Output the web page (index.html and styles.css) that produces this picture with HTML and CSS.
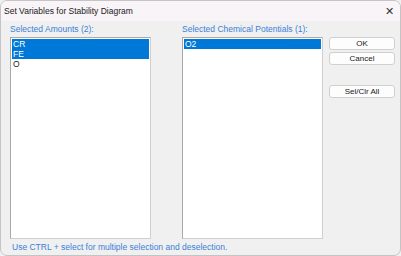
FILE: index.html
```html
<html>
<head>
<title>Set Variables for Stability Diagram</title>
<link rel="stylesheet" href="styles.css">
</head>
<body>
<div class="window">
  <div class="titlebar">
    <span class="title">Set Variables for Stability Diagram</span>
    <span class="close">&#x2715;</span>
  </div>
  <div class="content">
    <div class="col">
      <div class="caption">Selected Amounts (2):</div>
      <div class="listbox">
        <div class="item sel">CR</div>
        <div class="item sel">FE</div>
        <div class="item">O</div>
      </div>
    </div>
    <div class="col col2">
      <div class="caption">Selected Chemical Potentials (1):</div>
      <div class="listbox">
        <div class="item sel">O2</div>
      </div>
    </div>
    <div class="buttons">
      <button class="btn">OK</button>
      <button class="btn">Cancel</button>
      <button class="btn selall">Sel/Clr All</button>
    </div>
  </div>
  <div class="hint">Use CTRL + select for multiple selection and deselection.</div>
</div>
</body>
</html>
```

FILE: styles.css
```css
BODY {margin:0;font-family:"Liberation Sans",Arial,sans-serif;font-size:8.5px;background:#f0f0f0;}

.window {width:401px;height:256px;box-sizing:border-box;border:1px solid #c4c4c4;border-radius:7px;
  background:#f0f0f0;overflow:hidden;}
.titlebar {height:20px;background:#f8f4f7;display:flex;align-items:center;justify-content:space-between;
  padding:0 6px 0 3px;color:#1a1a1a;}
.title {font-size:8.5px;}
.close {font-size:11px;color:#333;}

.content {display:flex;padding-left:9px;}
.col {width:141px;}
.col2 {margin-left:31px;}
.caption {height:16px;line-height:16px;color:#3b7fd8;}
.listbox {height:202px;box-sizing:border-box;border:1px solid #a9a9a9;border-right-color:#cfcfcf;
  border-bottom-color:#cfcfcf;background:#ffffff;padding:1px 1px 0 1px;}
.item {height:10px;line-height:10px;padding-left:1px;color:#222;}
.item.sel {background:#0078d7;color:#ffffff;}

.buttons {display:flex;flex-direction:column;margin-left:6px;padding-top:16px;width:66px;}
.btn {height:13px;margin:0 0 2px 0;padding:0;font-family:"Liberation Sans",Arial,sans-serif;font-size:8px;
  background:#fdfdfd;border:1px solid #d0d0d0;border-radius:3px;color:#1a1a1a;}
.selall {margin-top:18px;}

.hint {color:#3b7fd8;padding:3px 0 0 11px;}
```
